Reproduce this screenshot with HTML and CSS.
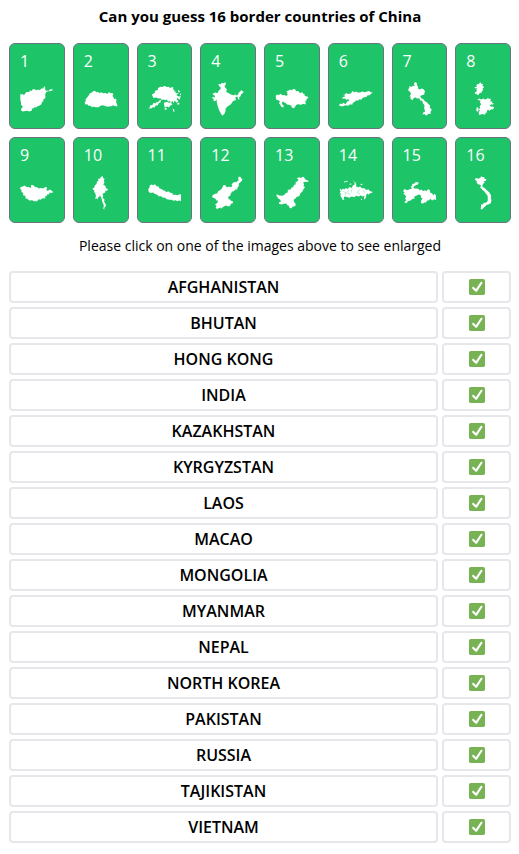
FILE: index.html
```
<!DOCTYPE html>
<html lang="en">
<head>
    <meta charset="UTF-8">
    <meta name="viewport" content="width=device-width, initial-scale=1.0">
    <title>Border Countries of China</title>
    <link rel="stylesheet" href="styles.css">
</head>
<body>
    <svg class="sprite" aria-hidden="true">
        <symbol id="check" viewBox="0 0 36 36">
            <rect width="36" height="36" rx="4" fill="#77b255"/>
            <path d="M29.3 6.4c-1.2-.8-2.7-.4-3.4.7L15.8 22.6l-4.7-4.3c-1-.9-2.6-.8-3.5.2s-.8 2.6.2 3.5l6.7 6.2c.5.4 1.1.7 1.7.7.7 0 1.6-.3 2.2-1.1L30 9.800c.8-1.100.5-2.700-.7-3.400z" fill="#fff"/>
        </symbol>
    </svg>

    <div class="container">
        <h1>Can you guess 16 border countries of China</h1>

        <div class="cards">
            <button type="button" class="card">
                <span>1</span>
                <svg viewBox="0 0 102 102"><path d="M1 36L5 38 8 36 12 40 18 32 20 30 28 30 30 26 36 27 38 22 44 22 50 25 56 23 60 25 64 20 70 20 72 15 76 13 76 23 80 27 84 26 86 27 90 23 99 22 98 26 90 28 84 28 79 31 76 38 77 46 75 50 70 54 71 58 67 60 64 68 58 72 52 73 51 76 44 76 40 80 36 80 36 86 28 89 22 87 8 89 3 85 4 80 8 77 8 74 3 68 3 61 1 54Z"/></svg>
            </button>
            <button type="button" class="card">
                <span>2</span>
                <svg viewBox="0 0 102 102"><path d="M2 62L5 58 5 52 10 46 16 38 18 34 24 32 28 27 34 27 38 31 44 30 46 34 52 31 58 34 66 33 70 36 76 30 80 34 85 33 89 36 86 42 90 47 90 52 96 50 98 54 97 61 100 68 101 74 90 72 88 70 80 74 76 73 72 75 66 73 56 70 50 72 44 76 34 76 30 74 24 76 20 72 14 72 10 67 4 68Z"/></svg>
            </button>
            <button type="button" class="card">
                <span>3</span>
                <svg viewBox="0 0 102 102"><path d="M12 38L22 32 20 27 30 24 30 18 38 14 44 15 50 11 56 15 62 14 68 18 73 15 77 17 75 22 80 24 80 30 85 29 83 34 93 33 86 39 90 43 100 44 96 48 97 54 90 50 88 46 87 52 92 59 86 63 81 56 77 64 74 57 70 63 65 57 61 60 57 53 51 55 48 53 40 54 38 49 32 50 24 47 16 48Z"/><path d="M0 82L5 77 7 70 13 70 17 63 22 65 27 60 30 62 35 55 39 54 38 61 32 64 30 71 24 70 20 77 14 76 10 80 5 79Z"/><path d="M48 63l10-3 4 3 6-2 6 7-7 4-4 5-5-3-8 2zM50 78h6v6h-5zM74 80l5 3 1 8-3-2zM88 65l6-3 1 5-6 2zM90 25l5 1 1 4-4 2zM96 36l4-1 1 4-4 1z"/></svg>
            </button>
            <button type="button" class="card">
                <span>4</span>
                <svg viewBox="0 0 102 102"><path d="M22 6L30 7 32 3 38 4 44 1 45 7 41 12 44 18 48 22 46 30 54 34 60 38 70 41 73 36 76 41 81 39 84 32 88 29 92 24 94 28 99 29 96 34 91 37 89 44 85 45 86 53 82 52 80 44 74 46 74 50 76 55 69 56 64 61 60 67 50 74 44 80 44 88 41 96 34 102 29 94 24 84 20 72 17 60 18 53 12 58 6 55 9 51 3 48 5 45 13 47 10 40 5 38 7 34 14 32 20 34 22 28 28 22 30 17 25 13Z"/></svg>
            </button>
            <button type="button" class="card">
                <span>5</span>
                <svg viewBox="0 0 102 102"><path d="M2 42L6 38 12 40 16 35 22 40 29 39 34 42 39 38 36 34 38 31 34 28 42 26 45 23 50 25 56 21 62 23 63 28 70 27 76 34 82 30 86 36 89 36 90 42 98 44 101 48 95 51 96 56 91 57 93 63 92 68 85 66 80 69 68 67 63 70 60 76 56 79 50 76 50 72 43 69 36 68 32 63 28 63 25 58 21 62 22 68 26 70 26 77 18 74 16 68 12 64 15 58 10 55 4 54Z"/></svg>
            </button>
            <button type="button" class="card">
                <span>6</span>
                <svg viewBox="0 0 102 102"><path d="M12 39L20 37 20 33 28 36 36 35 40 27 46 31 52 29 56 32 64 32 70 29 78 31 88 28 92 27 95 31 102 32 96 36 92 40 85 41 83 45 76 46 70 49 68 54 62 52 58 56 51 56 48 60 42 63 40 69 34 67 28 72 20 70 10 74 0 71 3 65 10 67 12 62 20 67 24 60 32 56 27 52 22 54 18 50 9 50 11 46 20 43 16 40Z"/></svg>
            </button>
            <button type="button" class="card">
                <span>7</span>
                <svg viewBox="0 0 102 102"><path d="M36 0L42 3 42 10 46 14 45 20 51 23 57 20 62 22 67 29 64 34 65 38 56 40 52 44 56 50 61 51 66 58 72 61 77 67 82 71 81 77 87 84 83 91 84 97 77 96 70 102 65 97 59 98 61 92 66 91 66 85 64 80 65 70 60 64 58 56 53 57 49 49 42 50 38 46 32 49 29 55 22 50 24 44 19 44 24 37 22 30 16 26 16 21 20 18 18 13 26 14 31 11 36 12 33 6Z"/></svg>
            </button>
            <button type="button" class="card">
                <span>8</span>
                <svg viewBox="0 0 102 102"><path d="M34 7L40 5 43 0 46 5 52 6 49 11 55 15 50 20 52 25 48 27 48 32 41 33 39 38 34 39 31 35 26 37 28 31 33 27 31 22 35 19 26 19 27 15 33 15 31 10Z"/><path d="M34 54L40 50 46 53 53 50 56 53 64 51 66 47 69 51 73 50 75 54 73 59 80 59 78 64 84 64 81 69 77 67 71 71 77 75 82 74 85 78 81 83 75 82 72 87 66 84 63 88 64 92 60 92 57 99 50 97 40 100 38 90 43 87 38 83 42 79 42 72 46 67 42 62 44 57Z"/><path d="M32 77h5l1 10-4 3-3-4z"/></svg>
            </button>
            <button type="button" class="card">
                <span>9</span>
                <svg viewBox="0 0 102 102"><path d="M1 34L8 32 14 29 20 33 27 33 31 36 34 33 33 27 41 28 45 33 52 34 56 38 63 36 70 38 76 33 82 35 80 42 84 45 90 41 95 44 101 49 93 51 88 50 89 55 82 56 80 61 75 62 77 68 68 67 62 72 56 70 52 76 44 76 36 73 28 74 22 69 17 68 16 60 9 58 10 51 4 48 5 42 1 40Z"/></svg>
            </button>
            <button type="button" class="card">
                <span>10</span>
                <svg viewBox="0 0 102 102"><path d="M51 3L56 0 58 6 62 8 60 15 62 20 58 26 65 30 66 37 73 39 69 45 65 44 64 50 56 54 58 61 56 66 62 71 61 78 66 86 65 93 61 96 62 101 58 98 60 91 58 84 55 78 54 70 51 64 49 58 46 63 42 65 42 71 38 67 34 70 36 60 34 52 31 49 31 44 25 39 31 35 33 28 38 24 39 17 44 14 42 8 48 8Z"/></svg>
            </button>
            <button type="button" class="card">
                <span>11</span>
                <svg viewBox="0 0 102 102"><path d="M1 40L5 33 5 29 11 26 16 28 21 25 26 31 32 32 34 37 42 40 46 43 52 45 56 49 61 46 66 50 74 52 75 57 82 57 88 58 94 56 101 55 99 63 102 69 101 76 94 74 88 76 84 73 76 75 72 72 66 72 60 71 54 69 52 65 45 66 40 61 32 61 28 57 20 54 15 50 8 51 2 48Z"/></svg>
            </button>
            <button type="button" class="card">
                <span>12</span>
                <svg viewBox="0 0 102 102"><path d="M82 7L84 2 89 2 91 7 95 9 93 15 88 20 84 23 84 31 79 37 80 41 73 41 69 46 64 47 60 53 58 60 52 63 53 70 58 71 60 75 66 76 66 82 60 84 58 90 52 92 46 89 42 91 34 95 31 99 28 95 18 100 14 96 17 90 12 87 20 80 21 74 16 74 13 68 4 65 4 59 12 54 19 53 21 47 31 40 35 34 37 28 43 27 45 32 50 34 56 32 58 35 65 30 62 25 68 20 72 18 77 19 80 15 84 12Z"/></svg>
            </button>
            <button type="button" class="card">
                <span>13</span>
                <svg viewBox="0 0 102 102"><path d="M66 7L73 4 78 6 84 2 88 3 90 9 95 12 101 14 100 18 91 17 85 20 88 26 86 30 91 34 87 38 82 48 77 51 75 58 71 62 66 63 61 69 56 72 58 79 62 83 62 91 54 92 49 98 43 95 42 90 36 88 35 83 26 84 20 86 12 84 12 80 18 77 16 72 10 68 4 59 6 55 12 59 22 60 29 57 32 52 39 49 38 42 48 40 50 35 55 34 57 27 63 25 62 19 68 16 71 11Z"/></svg>
            </button>
            <button type="button" class="card">
                <span>14</span>
                <svg viewBox="0 0 102 102"><path d="M4 38L8 43 12 38 16 41 21 36 26 39 32 33 38 36 42 29 48 25 46 18 49 18 52 26 52 32 58 34 64 32 69 37 77 37 82 42 89 40 93 45 102 48 98 51 93 52 90 57 86 53 82 58 82 64 78 70 75 70 77 60 70 62 66 58 60 62 52 60 46 64 38 62 31 66 22 63 17 62 14 66 16 72 11 72 7 64 4 60 6 54 2 52 5 46 2 42Z"/><path d="M14 17l12-3 2 2-12 4zM30 26l6-4 2 4zM42 13l3 2 2 5zM64 27l5-4 2 4zM66 68l4 2-3 4z"/><path class="river" d="M13 46l9 5-4 7M29 43l-3 7 8 8M40 38l-4 12M62 40l-7 10 8 5M74 43l3 7"/></svg>
            </button>
            <button type="button" class="card">
                <span>15</span>
                <svg viewBox="0 0 102 102"><path d="M24 32L29 28 27 24 35 23 39 17 43 20 47 18 46 25 40 27 35 30 31 34 34 38 40 38 48 39 50 44 55 41 61 45 67 43 70 46 76 40 81 42 82 50 88 53 92 58 95 54 100 59 99 64 103 67 101 73 94 70 88 74 82 69 79 73 72 75 70 80 64 80 60 84 54 81 55 74 59 68 54 65 54 58 48 56 40 60 34 62 35 69 29 69 23 74 15 76 10 82 4 79 10 73 6 68 10 63 7 58 1 54 5 50 0 45 5 39 12 43 20 40 27 38Z"/></svg>
            </button>
            <button type="button" class="card">
                <span>16</span>
                <svg viewBox="0 0 102 102"><path d="M27 8L33 6 37 8 44 5 45 1 50 3 55 3 56 8 62 10 60 14 53 16 57 20 51 24 49 31 53 35 58 38 63 43 70 49 76 59 75 66 77 73 75 82 67 86 62 88 58 92 54 95 48 102 44 98 46 92 45 86 51 86 54 81 60 81 65 77 66 68 65 59 60 53 55 46 50 42 45 36 42 34 46 30 42 26 37 26 32 20 33 15 28 13Z"/></svg>
            </button>
        </div>

        <p class="hint">Please click on one of the images above to see enlarged</p>

        <ul class="countries">
            <li><span>AFGHANISTAN</span><span class="status"><svg><use href="#check"/></svg></span></li>
            <li><span>BHUTAN</span><span class="status"><svg><use href="#check"/></svg></span></li>
            <li><span>HONG KONG</span><span class="status"><svg><use href="#check"/></svg></span></li>
            <li><span>INDIA</span><span class="status"><svg><use href="#check"/></svg></span></li>
            <li><span>KAZAKHSTAN</span><span class="status"><svg><use href="#check"/></svg></span></li>
            <li><span>KYRGYZSTAN</span><span class="status"><svg><use href="#check"/></svg></span></li>
            <li><span>LAOS</span><span class="status"><svg><use href="#check"/></svg></span></li>
            <li><span>MACAO</span><span class="status"><svg><use href="#check"/></svg></span></li>
            <li><span>MONGOLIA</span><span class="status"><svg><use href="#check"/></svg></span></li>
            <li><span>MYANMAR</span><span class="status"><svg><use href="#check"/></svg></span></li>
            <li><span>NEPAL</span><span class="status"><svg><use href="#check"/></svg></span></li>
            <li><span>NORTH KOREA</span><span class="status"><svg><use href="#check"/></svg></span></li>
            <li><span>PAKISTAN</span><span class="status"><svg><use href="#check"/></svg></span></li>
            <li><span>RUSSIA</span><span class="status"><svg><use href="#check"/></svg></span></li>
            <li><span>TAJIKISTAN</span><span class="status"><svg><use href="#check"/></svg></span></li>
            <li><span>VIETNAM</span><span class="status"><svg><use href="#check"/></svg></span></li>
        </ul>
    </div>
</body>
</html>
```
FILE: styles.css
```
* {
    box-sizing: border-box;
}
body {
    margin: 0;
    background-color: #fff;
    color: #000;
    font-family: "Segoe UI", "Open Sans", "Noto Sans", sans-serif;
}
.sprite {
    display: none;
}
.container {
    padding: 4px 8px 8px 9px;
}
h1 {
    margin: 0 0 15px;
    font-size: 15px;
    line-height: 24px;
    font-weight: 700;
    text-align: center;
}
.cards {
    display: grid;
    grid-template-columns: repeat(8, 1fr);
    gap: 8px;
}
.card {
    display: flex;
    flex-direction: column;
    gap: 9px;
    min-width: 0;
    padding: 5px 10px 12px;
    border: 1px solid #6b7280;
    border-radius: 6px;
    background-color: #1dc468;
    color: #fff;
    font-family: inherit;
    font-size: 16px;
    line-height: 24px;
    text-align: left;
    cursor: pointer;
}
.card svg {
    display: block;
    width: 100%;
    fill: #fff;
}
.card .river {
    fill: none;
    stroke: #1dc468;
    stroke-width: 1;
}
.hint {
    margin: 11px 0 13px;
    font-size: 14px;
    line-height: 24px;
    text-align: center;
}
.countries {
    display: flex;
    flex-direction: column;
    gap: 4px;
    margin: 0;
    padding: 0;
    list-style: none;
}
.countries li {
    display: flex;
    gap: 4px;
    font-size: 16px;
    line-height: 28px;
    font-weight: 600;
    text-align: center;
}
.countries span {
    flex: 1;
    border: 2px solid #e5e7eb;
    border-radius: 4px;
}
.countries .status {
    display: flex;
    flex: 0 0 69px;
    align-items: center;
    justify-content: center;
}
.status svg {
    width: 16px;
    height: 16px;
}
```
